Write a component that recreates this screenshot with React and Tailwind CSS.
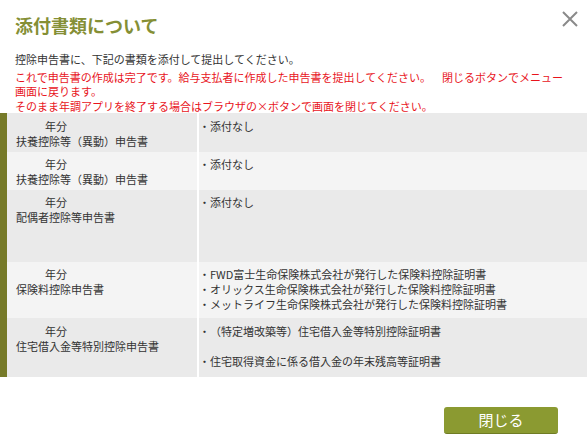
import React from 'react';

const rows = [
  { h: 'h-[39px]', pt: 'pt-[6px]', bg: 'bg-[#eaeaea]', name: '扶養控除等（異動）申告書', docs: ['・添付なし'] },
  { h: 'h-[38px]', pt: 'pt-[5px]', bg: 'bg-[#f4f4f4]', name: '扶養控除等（異動）申告書', docs: ['・添付なし'] },
  { h: 'h-[72px]', pt: 'pt-[5px]', bg: 'bg-[#eaeaea]', name: '配偶者控除等申告書', docs: ['・添付なし'] },
  {
    h: 'h-[56px]', pt: 'pt-[5px]', bg: 'bg-[#f4f4f4]', name: '保険料控除申告書', tight: true,
    docs: [
      '・FWD富士生命保険株式会社が発行した保険料控除証明書',
      '・オリックス生命保険株式会社が発行した保険料控除証明書',
      '・メットライフ生命保険株式会社が発行した保険料控除証明書',
    ],
  },
  {
    h: 'h-[59px]', pt: 'pt-[6px]', bg: 'bg-[#eaeaea]', name: '住宅借入金等特別控除申告書',
    docs: ['・（特定増改築等）住宅借入金等特別控除証明書', '', '・住宅取得資金に係る借入金の年末残高等証明書'],
  },
];

export default function App() {
  return (
    <div className="w-[587px] h-[436px] bg-white relative overflow-hidden font-['Noto_Sans_CJK_JP','Noto_Sans',sans-serif] text-[#333] [text-spacing-trim:space-all]">
      {/* header */}
      <div className="flex items-start justify-between pt-[11px] pl-[15px] pr-[9px]">
        <h1 className="mt-[3px] text-[18px] leading-[22px] font-bold text-[#858f35]">添付書類について</h1>
        <button className="w-4 h-4">
          <svg viewBox="0 0 16 16" width="16" height="16">
            <path d="M1 1L15 15M15 1L1 15" stroke="#8a8a8a" strokeWidth="2" fill="none" />
          </svg>
        </button>
      </div>

      {/* messages */}
      <div className="px-[15px] mt-[17px] text-[11px]">
        <p className="leading-[13px]">控除申告書に、下記の書類を添付して提出してください。</p>
        <p className="mt-[4px] leading-[14px] text-[#e8141c]">
          これで申告書の作成は完了です。給与支払者に作成した申告書を提出してください。　閉じるボタンでメニュー<br />
          画面に戻ります。
        </p>
        <p className="mt-[1px] leading-[14px] text-[#e8141c]">そのまま年調アプリを終了する場合はブラウザの×ボタンで画面を閉じてください。</p>
      </div>

      {/* attachments table */}
      <div className="flex">
        <div className="w-[7px] bg-[#767a29]" />
        <div className="flex-1 flex flex-col">
          {rows.map((r, i) => (
            <div key={i} className={`grid grid-cols-[190px_1fr] gap-x-[2px] bg-white ${r.h}`}>
              <div className={`${r.bg} ${r.pt} pl-[9px] text-[11px] leading-[15px]`}>
                <div className="pl-[29px]">年分</div>
                <div>{r.name}</div>
              </div>
              <div className={`${r.bg} ${r.pt} text-[11px] ${r.tight ? 'leading-[14px]' : 'leading-[15px]'}`}>
                {r.docs.map((d, j) => (
                  <div key={j} className="min-h-[15px]">{d}</div>
                ))}
              </div>
            </div>
          ))}
        </div>
      </div>

      {/* footer */}
      <div className="flex justify-end pr-[29px] mt-[30px]">
        <button className="w-[114px] h-[27px] rounded-[3px] bg-[#8b9a31] border-b border-[#6f7c24] text-white text-[15px] leading-[26px] text-center">
          閉じる
        </button>
      </div>
    </div>
  );
}
